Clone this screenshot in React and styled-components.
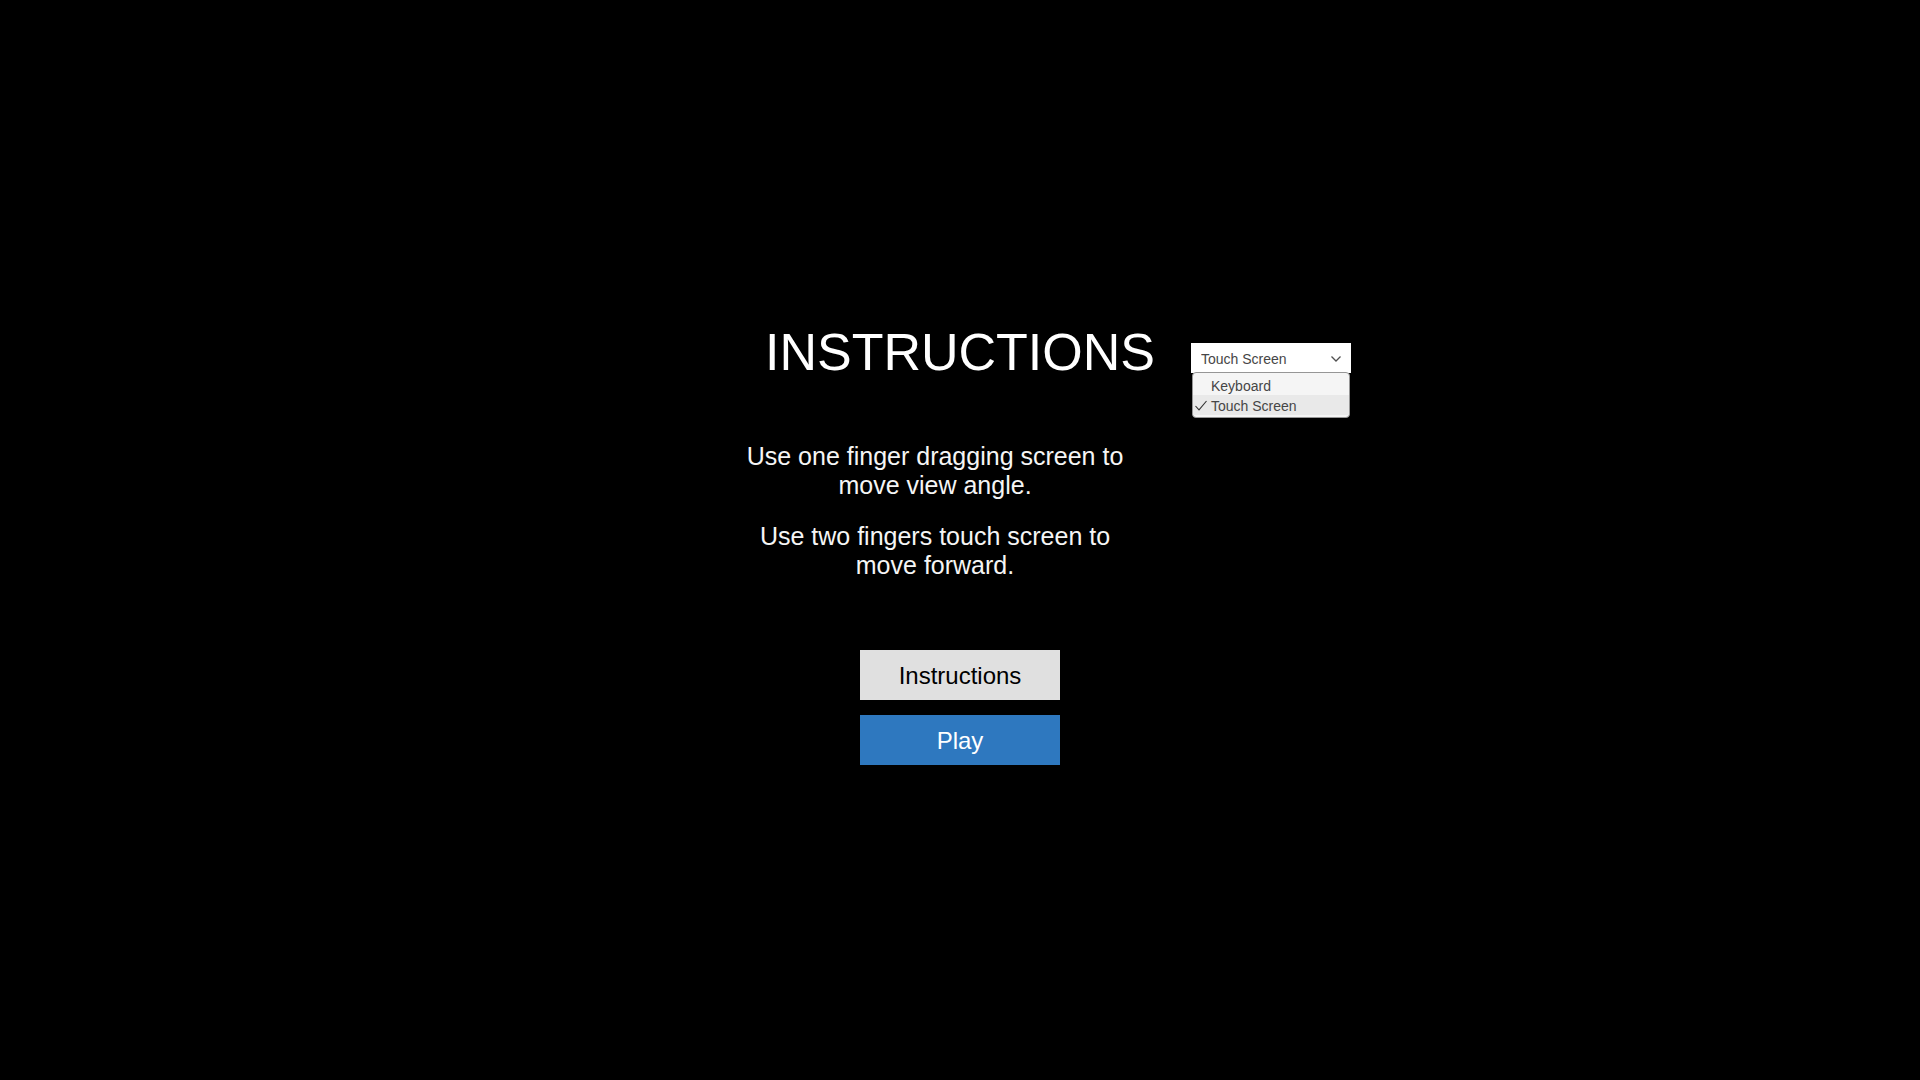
import React, { useState } from "react";
import styled, { createGlobalStyle } from "styled-components";

const GlobalStyle = createGlobalStyle`
  * {
    box-sizing: border-box;
  }
  body {
    margin: 0;
    background: #000;
    font-family: "Liberation Sans", Arial, sans-serif;
  }
`;

const Page = styled.main`
  min-height: 100vh;
  display: flex;
  flex-direction: column;
  align-items: center;
  justify-content: center;
`;

const Header = styled.header`
  width: 100%;
  display: grid;
  grid-template-columns: 1fr auto 1fr;
  column-gap: 36px;
  margin-bottom: 53px;
`;

const Title = styled.h1`
  grid-column: 2;
  margin: 0;
  font-size: 52px;
  font-weight: 400;
  line-height: 74px;
  color: #fff;
`;

const Dropdown = styled.div`
  position: relative;
  width: 160px;
  height: 30px;
  margin-top: 28px;
`;

const Select = styled.select`
  appearance: none;
  display: block;
  width: 100%;
  height: 30px;
  padding: 2px 30px 0 10px;
  border: 0;
  border-radius: 0;
  outline: 0;
  background: #fff;
  color: #464646;
  font-family: inherit;
  font-size: 14px;
`;

const Chevron = styled.svg`
  position: absolute;
  top: 12px;
  right: 9px;
  width: 12px;
  height: 8px;
  pointer-events: none;
`;

const OptionList = styled.ul`
  position: absolute;
  top: 100%;
  left: 1px;
  right: 1px;
  margin: -1px 0 0;
  padding: 2px 0;
  list-style: none;
  background: #f5f5f5;
  border: 1px solid #969696;
  border-radius: 4px;
  z-index: 1;
`;

const Option = styled.li`
  display: flex;
  align-items: center;
  height: 20px;
  padding: 2px 0 0 2px;
  gap: 4px;
  font-size: 14px;
  color: #464646;
  background: ${(p) => (p["aria-selected"] ? "#e9e9e9" : "transparent")};
  cursor: default;
`;

const Check = styled.svg`
  width: 12px;
  height: 12px;
  visibility: ${(p) => (p.$on ? "visible" : "hidden")};
`;

const Copy = styled.section`
  width: 450px;
  max-width: 100%;
  padding-right: 50px;
  display: flex;
  flex-direction: column;
  gap: 22px;
  margin-bottom: 70px;
`;

const Paragraph = styled.p`
  margin: 0;
  font-size: 25px;
  line-height: 29px;
  text-align: center;
  color: #f5f5f5;
`;

const Actions = styled.nav`
  display: flex;
  flex-direction: column;
  gap: 15px;
`;

const Button = styled.button`
  width: 200px;
  height: 50px;
  padding: 1px 0 0;
  border: 0;
  font-family: inherit;
  font-size: 24px;
  background: ${(p) => (p.$primary ? "#2e78bf" : "#e0e0e0")};
  color: ${(p) => (p.$primary ? "#fff" : "#000")};
`;

const controls = ["Keyboard", "Touch Screen"];

const instructions = {
  Keyboard: [
    "Use the mouse to move view angle.",
    "Use the arrow keys to move forward.",
  ],
  "Touch Screen": [
    "Use one finger dragging screen to move view angle.",
    "Use two fingers touch screen to move forward.",
  ],
};

export default function App() {
  const [control, setControl] = useState("Touch Screen");
  const [open, setOpen] = useState(true);

  const choose = (name) => {
    setControl(name);
    setOpen(false);
  };

  return (
    <>
      <GlobalStyle />
      <Page>
        <Header>
          <Title>INSTRUCTIONS</Title>
          <Dropdown>
            <Select
              aria-label="Controls"
              value={control}
              onChange={(e) => setControl(e.target.value)}
              onMouseDown={(e) => {
                e.preventDefault();
                setOpen(!open);
              }}
            >
              {controls.map((name) => (
                <option key={name}>{name}</option>
              ))}
            </Select>
            <Chevron viewBox="0 0 12 8" aria-hidden="true">
              <path d="M1.5 1.5 6 6l4.500-4.500" fill="none" stroke="#505050" strokeWidth="1.300" />
            </Chevron>
            {open && (
              <OptionList role="listbox" aria-label="Controls">
                {controls.map((name) => (
                  <Option
                    key={name}
                    role="option"
                    aria-selected={name === control}
                    onClick={() => choose(name)}
                  >
                    <Check $on={name === control} viewBox="0 0 12 12" aria-hidden="true">
                      <path d="M.5 6 4 9.800 11.500 1" fill="none" stroke="#323232" strokeWidth="1.100" />
                    </Check>
                    {name}
                  </Option>
                ))}
              </OptionList>
            )}
          </Dropdown>
        </Header>
        <Copy>
          {instructions[control].map((text) => (
            <Paragraph key={text}>{text}</Paragraph>
          ))}
        </Copy>
        <Actions>
          <Button type="button">Instructions</Button>
          <Button type="button" $primary>
            Play
          </Button>
        </Actions>
      </Page>
    </>
  );
}
